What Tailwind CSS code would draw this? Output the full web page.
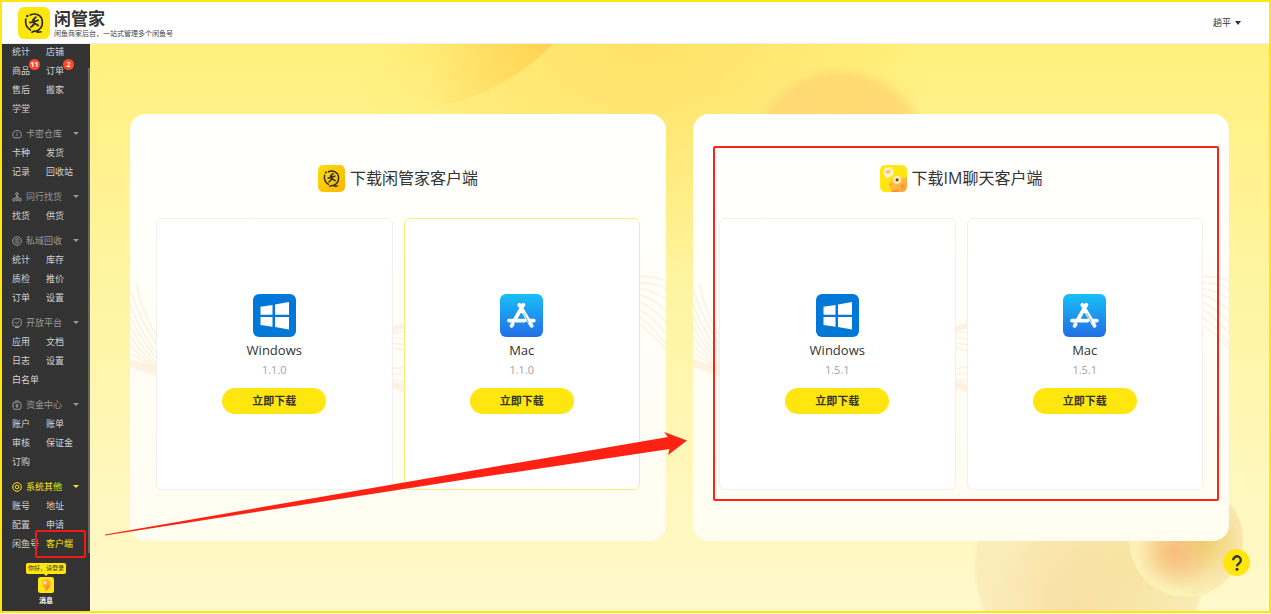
<!DOCTYPE html>
<html lang="zh-CN">
<head>
<meta charset="utf-8">
<meta name="viewport" content="width=device-width, initial-scale=1">
<title>闲管家</title>
<script src="https://cdn.jsdelivr.net/npm/@tailwindcss/browser@4"></script>
</head>
<body class="bg-white font-['Open_Sans','Noto_Sans_CJK_SC',sans-serif] text-[#333]">
<svg class="absolute size-0" aria-hidden="true">
  <defs>
    <linearGradient id="gold" x1="0" y1="0" x2="1" y2="1"><stop offset="0" stop-color="#ffdc0c"/><stop offset="1" stop-color="#ffb400"/></linearGradient>
    <linearGradient id="sky" x1="0" y1="0" x2="0" y2="1"><stop offset="0" stop-color="#18bff8"/><stop offset="1" stop-color="#226ee6"/></linearGradient>
    <linearGradient id="fish" x1="0" y1="0" x2="1" y2="1"><stop offset="0" stop-color="#ffd43a"/><stop offset="1" stop-color="#ff9c3c"/></linearGradient>
  </defs>
  <symbol id="mark" viewBox="0 0 32 32">
    <g fill="none" stroke="#2d2d2d" stroke-linecap="round">
      <path stroke-width="1.700" d="M7.800 12c-.8 4.200.6 8.600 4.600 11M12.200 8c5.400-2.600 12 .4 12.200 7 .1 4.600-2.600 8-6.600 9.400M14 25.200c2-1.400 3.300-1.200 4.800-.5 1.300.6 2.500.6 4.200.1"/>
      <path stroke-width="1.800" d="M17.800 10.200l-3 3M12 15.600c3-.6 5.500-1 8-2.400M16.200 13.500c.3 2.800-.8 5.200-3.200 6.500M16.600 16.200l3.600 2.300"/>
    </g>
    <circle cx="9.300" cy="9" r="1.200" fill="#2d2d2d"/>
  </symbol>
  <symbol id="windows" viewBox="0 0 43 43">
    <rect width="43" height="43" rx="6" fill="#0078d7"/>
    <path fill="#fff" d="M7.500 12.800 19.500 11v9.800h-12zM22 10.600 36 8v12.800H22zM7.500 23h12v9.800l-12-1.800zM22 23h14v12.500l-14-2.400z"/>
  </symbol>
  <symbol id="appstore" viewBox="0 0 43 43">
    <rect width="43" height="43" rx="6" fill="url(#sky)"/>
    <g stroke="#fff" stroke-width="3.800" stroke-linecap="round" fill="none">
      <path d="M23.400 10.800 14.800 25.800M19.300 10.800l12.300 21M9 26.600h15.500M29.800 26.600h4M12.600 30.200l-1 1.700"/>
    </g>
    <path d="m23.700 19.200 4.900 9.400" stroke="#1f8fed" stroke-width=".6"/>
  </symbol>
  <symbol id="chatfish" viewBox="0 0 26 26">
    <rect width="26" height="26" rx="5" fill="#ffe60f"/>
    <path fill="url(#fish)" d="M9 21c0-6 4-10.500 9-9.500 2.500.5 3.500 2 5.500.8L26 11v10a5 5 0 0 1-5 5H11c1-1.500-2-3-2-5z"/>
    <path fill="#ff8f3f" d="M11 17l-2.500 1.500L11 20zM20 18l4 2-3.500 3zM12 24.500l6-1-1 2.500h-6z"/>
    <circle cx="16.500" cy="14.300" r="3.800" fill="#fff0c2"/><circle cx="16.500" cy="14.300" r="1.500" fill="#8a3d1c"/>
    <path fill="#fff3c4" d="M7.500 2.200a4.900 4.900 0 1 1 .2 9.700L5.500 13l-.3-2A4.900 4.900 0 0 1 7.500 2.200z"/>
    <path stroke="#ff9a52" stroke-width="1" d="M5.500 5.700h5M5.500 7.500h3.500"/>
  </symbol>
  <symbol id="waves" viewBox="0 0 536 120" preserveAspectRatio="none">
    <g fill="none" stroke="#fdf0df" stroke-width="1.400">
      <path d="M6 8c6 30 16 50 30 66M1 18c8 24 18 44 34 64M0 30c8 22 18 40 34 58M0 42c8 18 18 34 34 50M0 52c8 16 18 30 34 44M0 62c8 12 18 24 34 36M0 71c8 10 18 18 34 28M0 79c10 6 20 12 34 20M0 86c10 4 20 8 34 14"/>
      <path d="M255 56c12-4 22-6 30-6M255 61c12-3 22-4 30-3M255 65c12-2 22-1 30 1M255 69c12 0 22 2 30 5M255 73c12 1 22 4 30 8M255 96c12-3 22-3 30-3M255 101c12-2 22-1 30 1M255 105c12 0 22 3 30 6M255 109c12 2 22 5 30 9"/>
      <path d="M500 4c14-3 26-1 36 3M500 9c14-2 26 1 36 6M500 14c14 0 26 4 36 11M500 19c14 1 26 8 36 18M500 25c14 3 26 12 36 23M500 31c14 5 26 16 36 28M500 37c14 8 26 19 36 33M500 44c14 9 26 19 36 31"/>
    </g>
    <path fill="#fdeedb" opacity=".7" d="M0 86c10 2 18 4 28 7v10C18 99 10 97 0 93zM260 106l16 5v8l-16-5zM260 53l16-5v6l-16 5z"/>
  </symbol>
</svg>

<div class="relative flex min-h-[613px] flex-col border-2 border-[#ffe60f]">
  <header class="flex h-[42px] items-center justify-between border-b border-[#f0eef2] bg-white pl-4 pr-7">
    <a href="#" class="flex items-center gap-1">
      <svg class="size-8 rounded-md bg-[#ffe60f]" aria-hidden="true"><use href="#mark"/></svg>
      <span class="flex flex-col pt-0.5">
        <span class="text-[17px] leading-5 font-bold">闲管家</span>
        <span class="text-[7px] leading-[10px] text-[#444]">闲鱼商家后台，一站式管理多个闲鱼号</span>
      </span>
    </a>
    <button class="flex items-center gap-1 text-[9px] leading-4">趟平
      <svg class="h-1 w-1.5" viewBox="0 0 6 4" aria-hidden="true"><path d="M0 0h6L3 4z" fill="#333"/></svg>
    </button>
  </header>

  <div class="flex flex-1">
    <aside class="relative flex w-[88px] shrink-0 flex-col bg-[#333] text-[9px] leading-[19px] text-[#d2d2d2]">
      <div class="absolute top-6 right-0 h-[485px] w-0.5 bg-[#666]"></div>
      <nav class="-mt-0.5 flex flex-col gap-1.5 pl-2.5">
        <div class="grid grid-cols-[34px_1fr]">
          <a href="#">统计</a><a href="#">店铺</a>
          <a href="#" class="relative">商品<span class="absolute -top-0.5 left-[17px] flex size-[11px] items-center justify-center rounded-full bg-[#ff4a26] text-[7px] font-bold text-white">11</span></a>
          <a href="#" class="relative">订单<span class="absolute -top-0.5 left-[17px] flex size-[11px] items-center justify-center rounded-full bg-[#ff4a26] text-[7px] font-bold text-white">2</span></a>
          <a href="#">售后</a><a href="#">搬家</a>
          <a href="#">学堂</a>
        </div>
        <div>
          <button class="flex w-full items-center text-[#999]">
            <svg class="mr-1 size-2.5" viewBox="0 0 10 10" fill="none" stroke="currentColor" aria-hidden="true"><path d="M2 8.800A4.300 4.300 0 1 1 8 8.800zM5 4.500v2.300M5 3v.7"/></svg>
            卡密仓库<svg class="mr-[11px] ml-auto h-[3px] w-1.5" viewBox="0 0 6 3" aria-hidden="true"><path d="M0 0h6L3 3z" fill="currentColor"/></svg>
          </button>
          <div class="grid grid-cols-[34px_1fr]"><a href="#">卡种</a><a href="#">发货</a><a href="#">记录</a><a href="#">回收站</a></div>
        </div>
        <div>
          <button class="flex w-full items-center text-[#999]">
            <svg class="mr-1 size-2.5" viewBox="0 0 10 10" fill="none" stroke="currentColor" aria-hidden="true"><circle cx="5" cy="2" r="1.300"/><circle cx="1.900" cy="7.800" r="1.300"/><circle cx="5" cy="7.800" r="1.100"/><circle cx="8.100" cy="7.800" r="1.300"/><path d="M5 3.300v3.300M2 6.500l3-2 3 2"/></svg>
            同行找货<svg class="mr-[11px] ml-auto h-[3px] w-1.5" viewBox="0 0 6 3" aria-hidden="true"><path d="M0 0h6L3 3z" fill="currentColor"/></svg>
          </button>
          <div class="grid grid-cols-[34px_1fr]"><a href="#">找货</a><a href="#">供货</a></div>
        </div>
        <div>
          <button class="flex w-full items-center text-[#999]">
            <svg class="mr-1 size-2.5" viewBox="0 0 10 10" fill="none" stroke="currentColor" aria-hidden="true"><circle cx="5" cy="5" r="4.300"/><path d="M2.800 4.500c.6-2 3.600-2.200 4.400-.5M7.200 5.500c-.6 2-3.600 2.200-4.400.5M3.500 5h3"/></svg>
            私域回收<svg class="mr-[11px] ml-auto h-[3px] w-1.5" viewBox="0 0 6 3" aria-hidden="true"><path d="M0 0h6L3 3z" fill="currentColor"/></svg>
          </button>
          <div class="grid grid-cols-[34px_1fr]"><a href="#">统计</a><a href="#">库存</a><a href="#">质检</a><a href="#">推价</a><a href="#">订单</a><a href="#">设置</a></div>
        </div>
        <div>
          <button class="flex w-full items-center text-[#999]">
            <svg class="mr-1 size-2.5" viewBox="0 0 10 10" fill="none" stroke="currentColor" aria-hidden="true"><rect x=".8" y=".8" width="8.400" height="7.400" rx="2"/><path d="m3 4.200 1.600 1.600L7.200 3M3 9.500h4"/></svg>
            开放平台<svg class="mr-[11px] ml-auto h-[3px] w-1.5" viewBox="0 0 6 3" aria-hidden="true"><path d="M0 0h6L3 3z" fill="currentColor"/></svg>
          </button>
          <div class="grid grid-cols-[34px_1fr]"><a href="#">应用</a><a href="#">文档</a><a href="#">日志</a><a href="#">设置</a><a href="#">白名单</a></div>
        </div>
        <div>
          <button class="flex w-full items-center text-[#999]">
            <svg class="mr-1 size-2.5" viewBox="0 0 10 10" fill="none" stroke="currentColor" aria-hidden="true"><rect x="1" y="2" width="8" height="7.300" rx="2"/><path d="M3.200 1h3.600M3.500 3.700 5 5.200l1.500-1.500M5 5v3M3.500 6.200h3"/></svg>
            资金中心<svg class="mr-[11px] ml-auto h-[3px] w-1.5" viewBox="0 0 6 3" aria-hidden="true"><path d="M0 0h6L3 3z" fill="currentColor"/></svg>
          </button>
          <div class="grid grid-cols-[34px_1fr]"><a href="#">账户</a><a href="#">账单</a><a href="#">审核</a><a href="#">保证金</a><a href="#">订购</a></div>
        </div>
        <div>
          <button class="flex w-full items-center text-[#ffe60f]">
            <svg class="mr-1 size-2.5" viewBox="0 0 10 10" fill="none" stroke="currentColor" aria-hidden="true"><circle cx="5" cy="5" r="4.300"/><circle cx="5" cy="5" r="1.800"/></svg>
            系统其他<svg class="mr-[11px] ml-auto h-[3px] w-1.5" viewBox="0 0 6 3" aria-hidden="true"><path d="M0 0h6L3 3z" fill="currentColor"/></svg>
          </button>
          <div class="grid grid-cols-[34px_1fr]"><a href="#">账号</a><a href="#">地址</a><a href="#">配置</a><a href="#">申请</a><a href="#">闲鱼号</a>
            <a href="#" class="relative text-[#ffe60f]">客户端<span class="absolute -top-1 -left-[11px] h-7 w-[51px] rounded-xs border-2 border-[#f01c12]"></span></a>
          </div>
        </div>
      </nav>
      <a href="#" class="mt-2.5 flex flex-col items-center text-white">
        <span class="rounded-xs bg-[#ffe60f] px-0.5 text-[6px] leading-[11px] text-[#333]">你好，请登录</span>
        <svg class="h-[3px] w-1" viewBox="0 0 4 3" aria-hidden="true"><path d="M0 0h4L2 2z" fill="#ffe60f"/></svg>
        <svg class="size-4" viewBox="0 0 16 16" aria-hidden="true"><rect width="16" height="16" rx="2.500" fill="#ffe60f"/><path d="M4 5c2-3 6-3.500 8-1 1.500 3 .5 6-2 8l-3 2 1-3c-2 0-3-1-3.500-2.500L6 8z" fill="#ffa53a"/><path d="m9 9 3-1-2 4-3 2z" fill="#ff7f3d"/><circle cx="7" cy="5.500" r="1.500" fill="#fff2c2"/></svg>
        <span class="text-[7px] leading-4 font-bold">消息</span>
      </a>
    </aside>

    <main class="relative flex flex-1 gap-[27px] overflow-hidden bg-linear-to-b from-[#fff07c] to-[#fff9cc] px-10 py-[70px]">
      <div class="absolute inset-0 bg-[radial-gradient(ellipse_290px_230px_at_47%_0%,#ffde62d0,#ffde6200)]"></div>
      <div class="absolute -top-[390px] left-[71px] size-[458px] rounded-full bg-[linear-gradient(80deg,#ffc94400_50%,#ffc944_88%)]"></div>
      <div class="absolute top-[28px] left-[660px] size-[180px] rounded-full bg-linear-to-b from-[#ffd570] to-[#ffe07a] opacity-85 blur-[4px]"></div>
      <div class="absolute right-[64px] -bottom-[69px] size-[230px] rounded-full bg-[radial-gradient(circle_at_43%_65%,#f8d99c,#f8d99c00_45%),radial-gradient(circle_at_65%_50%,#f5e297,#fbeab8_60%)] opacity-80 blur-[1px]"></div>
      <div class="absolute right-[26px] bottom-[14px] size-[114px] rounded-full bg-[radial-gradient(circle_at_40%_60%,#f7b974,#f7b97400_40%),radial-gradient(circle_at_65%_50%,#ebcb62,#f8e2a4_38%,#fdf2b8_62%)] opacity-90"></div>

      <section class="relative flex flex-1 flex-col rounded-2xl bg-linear-to-b from-white to-[#fffdf0] px-[26px] py-[51px]">
        <svg class="absolute top-[160px] left-0 h-[120px] w-full" aria-hidden="true"><use href="#waves"/></svg>
        <h2 class="mb-[26px] flex items-center justify-center gap-[5px] text-base leading-[27px]">
          <svg class="size-[27px]" viewBox="0 0 32 32" aria-hidden="true"><rect width="32" height="32" rx="6" fill="url(#gold)"/><use href="#mark" width="32" height="32"/></svg>下载闲管家客户端
        </h2>
        <div class="relative flex flex-1 gap-[11px]">
          <div class="flex flex-1 flex-col items-center rounded-md border border-[#f0f0f2] bg-white py-[75px]">
            <svg class="size-[43px]" aria-hidden="true"><use href="#windows"/></svg>
            <h3 class="mt-[3px] text-[13px] leading-5">Windows</h3>
            <p class="text-[11px] leading-5 text-[#a3a3a3]">1.1.0</p>
            <button class="mt-2 h-[26px] w-[104px] rounded-full bg-[#ffe60f] text-[11px] font-bold">立即下载</button>
          </div>
          <div class="flex flex-1 flex-col items-center rounded-md border border-[#fcee7a] bg-white py-[75px]">
            <svg class="size-[43px]" aria-hidden="true"><use href="#appstore"/></svg>
            <h3 class="mt-[3px] text-[13px] leading-5">Mac</h3>
            <p class="text-[11px] leading-5 text-[#a3a3a3]">1.1.0</p>
            <button class="mt-2 h-[26px] w-[104px] rounded-full bg-[#ffe60f] text-[11px] font-bold">立即下载</button>
          </div>
        </div>
      </section>

      <section class="relative flex flex-1 flex-col rounded-2xl bg-linear-to-b from-white to-[#fffdf0] px-[26px] py-[51px]">
        <svg class="absolute top-[160px] left-0 h-[120px] w-full" aria-hidden="true"><use href="#waves"/></svg>
        <h2 class="mb-[26px] flex items-center justify-center gap-[5px] text-base leading-[27px]">
          <svg class="size-[27px]" aria-hidden="true"><use href="#chatfish"/></svg>下载IM聊天客户端
        </h2>
        <div class="relative flex flex-1 gap-[11px]">
          <div class="flex flex-1 flex-col items-center rounded-md border border-[#f0f0f2] bg-white py-[75px]">
            <svg class="size-[43px]" aria-hidden="true"><use href="#windows"/></svg>
            <h3 class="mt-[3px] text-[13px] leading-5">Windows</h3>
            <p class="text-[11px] leading-5 text-[#a3a3a3]">1.5.1</p>
            <button class="mt-2 h-[26px] w-[104px] rounded-full bg-[#ffe60f] text-[11px] font-bold">立即下载</button>
          </div>
          <div class="flex flex-1 flex-col items-center rounded-md border border-[#f0f0f2] bg-white py-[75px]">
            <svg class="size-[43px]" aria-hidden="true"><use href="#appstore"/></svg>
            <h3 class="mt-[3px] text-[13px] leading-5">Mac</h3>
            <p class="text-[11px] leading-5 text-[#a3a3a3]">1.5.1</p>
            <button class="mt-2 h-[26px] w-[104px] rounded-full bg-[#ffe60f] text-[11px] font-bold">立即下载</button>
          </div>
        </div>
        <div class="pointer-events-none absolute top-8 right-2.5 bottom-10 left-5 rounded-xs border-2 border-[#ff2216]"></div>
      </section>

      <button aria-label="帮助" class="absolute right-[19px] bottom-[35px] flex size-[27px] items-center justify-center rounded-full bg-[#ffe60f]">
        <svg class="h-4 w-3" viewBox="0 0 12 16" fill="none" aria-hidden="true"><path d="M2.200 5.200a3.800 3.800 0 1 1 6 3C6.700 9.200 6 9.800 6 11.300" stroke="#333" stroke-width="2.400"/><circle cx="6" cy="14.200" r="1.500" fill="#333"/></svg>
      </button>
    </main>
  </div>

  <svg class="pointer-events-none absolute top-[428px] left-[102px] h-[108px] w-[584px]" viewBox="104 430 584 108" aria-hidden="true">
    <path fill="#ff2113" d="M105 534.500 460 472.700 668 437 664 432 687 440.500 668 455 669.500 449 460 480.300 105 535.500z"/>
  </svg>
</div>
</body>
</html>
